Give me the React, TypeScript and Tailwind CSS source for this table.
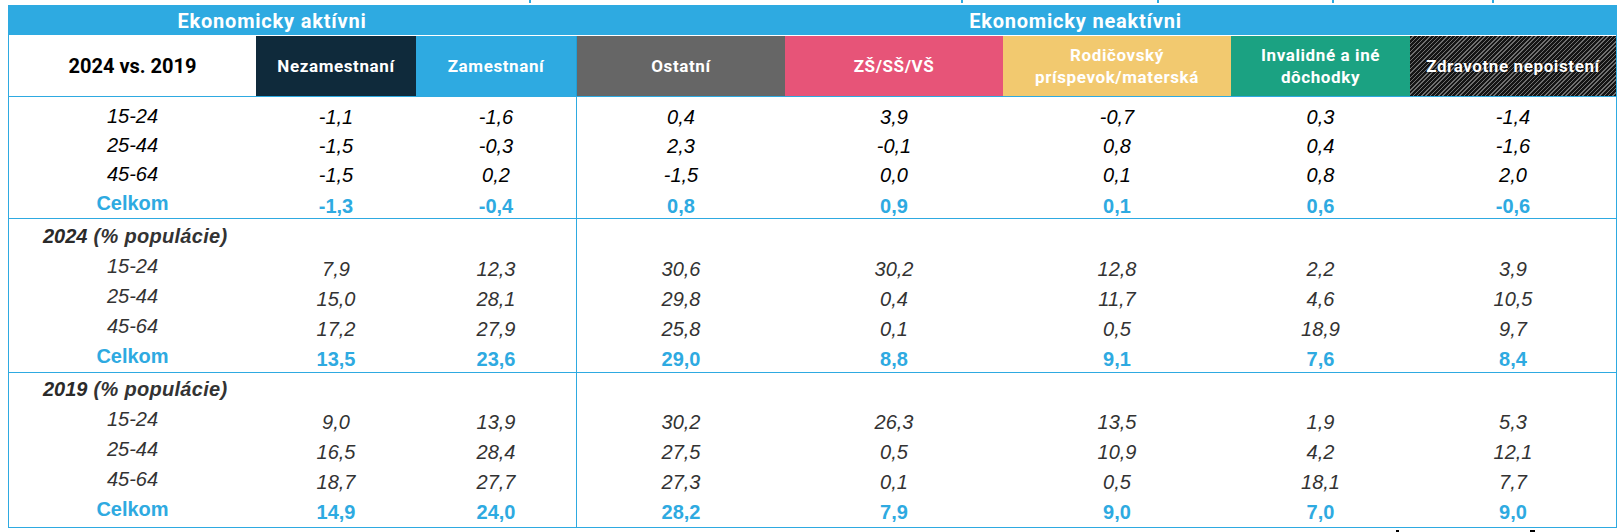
import React from "react";

type Row = { label: string; vals: string[]; total?: boolean };

const s1: Row[] = [
  { label: "15-24", vals: ["-1,1", "-1,6", "0,4", "3,9", "-0,7", "0,3", "-1,4"] },
  { label: "25-44", vals: ["-1,5", "-0,3", "2,3", "-0,1", "0,8", "0,4", "-1,6"] },
  { label: "45-64", vals: ["-1,5", "0,2", "-1,5", "0,0", "0,1", "0,8", "2,0"] },
  { label: "Celkom", vals: ["-1,3", "-0,4", "0,8", "0,9", "0,1", "0,6", "-0,6"], total: true },
];
const s2: Row[] = [
  { label: "15-24", vals: ["7,9", "12,3", "30,6", "30,2", "12,8", "2,2", "3,9"] },
  { label: "25-44", vals: ["15,0", "28,1", "29,8", "0,4", "11,7", "4,6", "10,5"] },
  { label: "45-64", vals: ["17,2", "27,9", "25,8", "0,1", "0,5", "18,9", "9,7"] },
  { label: "Celkom", vals: ["13,5", "23,6", "29,0", "8,8", "9,1", "7,6", "8,4"], total: true },
];
const s3: Row[] = [
  { label: "15-24", vals: ["9,0", "13,9", "30,2", "26,3", "13,5", "1,9", "5,3"] },
  { label: "25-44", vals: ["16,5", "28,4", "27,5", "0,5", "10,9", "4,2", "12,1"] },
  { label: "45-64", vals: ["18,7", "27,7", "27,3", "0,1", "0,5", "18,1", "7,7"] },
  { label: "Celkom", vals: ["14,9", "24,0", "28,2", "7,9", "9,0", "7,0", "9,0"], total: true },
];

function ValueCell({ v, total, dark, first }: { v: string; total?: boolean; dark: boolean; first: boolean }) {
  const shift = first && !total ? "pt-[2px]" : "pt-[6px]";
  const style = total
    ? "font-bold text-[#2EAAE1]"
    : dark
    ? "italic text-black"
    : "italic text-[#333333]";
  return <div className={`flex items-center justify-center ${shift} ${style}`}>{v}</div>;
}

function Section({
  title,
  rows,
  first,
  last,
}: {
  title?: string;
  rows: Row[];
  first?: boolean;
  last?: boolean;
}) {
  const rowH = first ? "h-[29px]" : "h-[30px]";
  const pad = first ? "pt-[4px] pb-[1px]" : last ? "pt-[1px] pb-[3px]" : "pt-[2px] pb-[1px]";
  return (
    <div className={`flex font-['Liberation_Sans',Arial,sans-serif] text-[20px] leading-none ${last ? "" : "border-b border-[#2EAAE1]"}`}>
      <div className={`w-[567px] ${pad}`}>
        {title && (
          <div className="h-[30px] flex items-center pl-[34px] font-bold italic text-[#333333] whitespace-nowrap">
            <span className="font-extrabold text-[#2a2a2a]">{title.split(" ")[0]}</span>
            <span className="ml-[6px] tracking-[0.3px]">{title.split(" ").slice(1).join(" ")}</span>
          </div>
        )}
        {rows.map((r) => (
          <div key={r.label} className={`grid grid-cols-[247px_160px_160px] ${rowH}`}>
            <div
              className={`flex items-center justify-center ${
                r.total ? "font-bold text-[#2EAAE1]" : first ? "italic text-black" : "italic text-[#333333]"
              }`}
            >
              {r.label}
            </div>
            <ValueCell v={r.vals[0]} total={r.total} dark={!!first} first={!!first} />
            <ValueCell v={r.vals[1]} total={r.total} dark={!!first} first={!!first} />
          </div>
        ))}
      </div>
      <div className={`flex-1 border-l border-[#2EAAE1] ${pad}`}>
        {title && <div className="h-[30px]" />}
        {rows.map((r) => (
          <div key={r.label} className={`grid grid-cols-[208px_218px_228px_179px_206px] ${rowH}`}>
            {r.vals.slice(2).map((v, i) => (
              <ValueCell key={i} v={v} total={r.total} dark={!!first} first={!!first} />
            ))}
          </div>
        ))}
      </div>
    </div>
  );
}

export default function App() {
  return (
    <div className="w-[1624px] h-[532px] bg-white overflow-hidden">
      {/* cropped descenders of text above */}
      <div className="h-[5px] flex items-start">
        <div className="w-[529px]" />
        <div className="w-[2px] h-[3px] bg-[#2EAAE1]" />
        <div className="w-[430px]" />
        <div className="w-[2px] h-[3px] bg-[#2EAAE1]" />
        <div className="w-[194px]" />
        <div className="w-[2px] h-[3px] bg-[#2EAAE1]" />
        <div className="w-[173px]" />
        <div className="w-[2px] h-[3px] bg-[#2EAAE1]" />
        <div className="w-[158px]" />
        <div className="w-[2px] h-[3px] bg-[#2EAAE1]" />
      </div>
      <div className="ml-[8px] w-[1609px] border border-[#2EAAE1]">
        {/* band */}
        <div className="flex h-[30px] bg-[#2EAAE1] border-b border-white font-['Roboto',sans-serif] font-bold text-[20px] tracking-[0.8px] text-white">
          <div className="w-[526px] flex items-center justify-center">Ekonomicky aktívni</div>
          <div className="flex-1 flex items-center justify-center">Ekonomicky neaktívni</div>
        </div>
        {/* header row */}
        <div className="grid grid-cols-[247px_160px_160px_209px_218px_228px_179px_206px] h-[61px] border-b border-[#2EAAE1] font-['Roboto',sans-serif] font-bold text-[17px] leading-[22px] tracking-[0.6px] text-white text-center">
          <div className="flex items-center justify-center bg-white text-black text-[20px] tracking-normal">2024 vs. 2019</div>
          <div className="flex items-center justify-center bg-[#0F2A3B]">Nezamestnaní</div>
          <div className="flex items-center justify-center bg-[#2EAAE1]">Zamestnaní</div>
          <div className="flex items-center justify-center bg-[#666666] border-l border-[#1E9FD8]">Ostatní</div>
          <div className="flex items-center justify-center bg-[#E75478]">ZŠ/SŠ/VŠ</div>
          <div className="flex items-center justify-center bg-[#F2C96F]">
            <span>
              Rodičovský
              <br />
              príspevok/materská
            </span>
          </div>
          <div className="flex items-center justify-center bg-[#1BA282]">
            <span>
              Invalidné a iné
              <br />
              dôchodky
            </span>
          </div>
          <div className="flex items-center justify-center bg-[#1a1a1a] bg-[image:repeating-linear-gradient(135deg,#151515_0px,#151515_2px,#707070_2px,#707070_3px)]">
            <span className="[text-shadow:0_0_2px_#000]">Zdravotne nepoistení</span>
          </div>
        </div>
        <Section rows={s1} first />
        <Section title="2024 (% populácie)" rows={s2} />
        <Section title="2019 (% populácie)" rows={s3} last />
      </div>
      <div className="flex h-[4px] items-end">
        <div className="w-[1396px]" />
        <div className="w-[3px] h-[2px] bg-black" />
        <div className="w-[131px]" />
        <div className="w-[5px] h-[2px] bg-black" />
      </div>
    </div>
  );
}
